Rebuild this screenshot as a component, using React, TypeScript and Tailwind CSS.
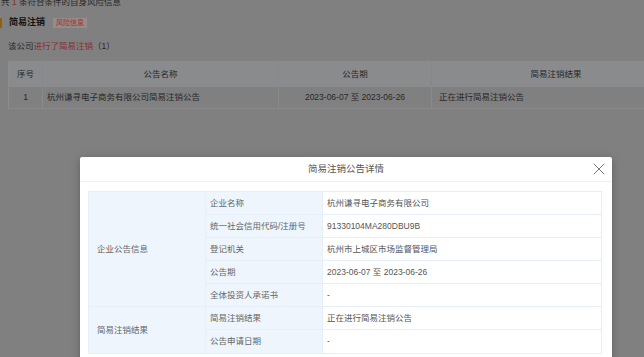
import { X } from "lucide-react";

const rows = [
  { label: "企业名称", value: "杭州谦寻电子商务有限公司" },
  { label: "统一社会信用代码/注册号", value: "91330104MA280DBU9B" },
  { label: "登记机关", value: "杭州市上城区市场监督管理局" },
  { label: "公告期", value: "2023-06-07 至 2023-06-26" },
  { label: "全体投资人承诺书", value: "-" },
  { label: "简易注销结果", value: "正在进行简易注销公告" },
  { label: "公告申请日期", value: "-" },
];

function DetailRow({ label, value, last }: { label: string; value: string; last?: boolean }) {
  return (
    <div className={`flex h-[23px] ${last ? "" : "border-b border-[#e6eef7]"}`}>
      <div className="w-[117px] flex items-center pl-[4px] bg-[#eef5fd] text-[#666] border-r border-[#e6eef7]">{label}</div>
      <div className="flex-1 flex items-center pl-[4px] text-[#555]">{value}</div>
    </div>
  );
}

export default function App() {
  return (
    <div className="relative w-[644px] h-[357px] overflow-hidden bg-[#d6d6d6] font-['Liberation_Sans','Noto_Sans_CJK_SC',sans-serif] text-[8.5px] text-[#333]">
      {/* page under the mask */}
      <div className="-mt-[4px]">
        <div className="h-[12px] leading-[12px] pl-[1px] text-[#444]">
          共 <span className="text-[#e0504c]">1</span> 条符合条件的自身风险信息
        </div>
        <div className="mt-[9px] flex items-center h-[12px]">
          <div className="w-[2px] h-[10px] bg-[#f0a020]"></div>
          <span className="ml-[7px] font-bold text-[9px] text-[#222]">简易注销</span>
          <span className="ml-[8px] px-[3px] h-[10px] leading-[10px] text-[7px] text-[#ff5a55] bg-[#ffe4e2]">风险信息</span>
        </div>
        <div className="mt-[11px] pl-[8px] h-[12px] leading-[12px] text-[#444]">
          该公司<span className="text-[#e0504c]">进行了简易注销</span>（1）
        </div>
        <div className="mt-[9px] ml-[8px] w-[672px] border-l border-[#e8ebef]">
          <div className="flex h-[26px] bg-[#e4e8ec] text-[#444]">
            <div className="w-[34px] flex items-center justify-center border-r border-[#dde2e8]">序号</div>
            <div className="w-[236px] flex items-center justify-center border-r border-[#dde2e8]">公告名称</div>
            <div className="w-[153px] flex items-center justify-center border-r border-[#dde2e8]">公告期</div>
            <div className="flex-1 flex items-center justify-center">简易注销结果</div>
          </div>
          <div className="flex h-[22px] border-b border-[#e6e6e6] text-[#444]">
            <div className="w-[34px] flex items-center justify-center border-r border-[#e6e6e6]">1</div>
            <div className="w-[236px] flex items-center pl-[4px] border-r border-[#e6e6e6]">杭州谦寻电子商务有限公司简易注销公告</div>
            <div className="w-[153px] flex items-center justify-center border-r border-[#e6e6e6]">2023-06-07 至 2023-06-26</div>
            <div className="flex-1 flex items-center pl-[7px]">正在进行简易注销公告</div>
          </div>
        </div>
      </div>

      {/* mask */}
      <div className="absolute inset-0 bg-black/40"></div>

      {/* modal */}
      <div className="absolute left-[80px] top-[157px] w-[532px] h-[220px] bg-white shadow-[0_2px_10px_rgba(0,0,0,0.25)] rounded-[2px]">
        <div className="relative h-[25px] flex items-center justify-center border-b border-[#f0f0f0] text-[9.5px] text-[#555]">
          简易注销公告详情
          <X className="absolute right-[3px] top-[2px] w-[20px] h-[20px] text-[#777]" strokeWidth={1.2} />
        </div>
        <div className="pt-[9px] pl-[8px] pr-[10px]">
          <div className="flex border border-[#e6eef7]">
            <div className="w-[117px] flex flex-col bg-[#eef5fd] text-[#666] border-r border-[#e6eef7]">
              <div className="h-[115px] flex items-center pl-[8px] border-b border-[#e6eef7]">企业公告信息</div>
              <div className="h-[46px] flex items-center pl-[8px]">简易注销结果</div>
            </div>
            <div className="flex-1 flex flex-col">
              {rows.map((r, i) => (
                <DetailRow key={r.label} label={r.label} value={r.value} last={i === rows.length - 1} />
              ))}
            </div>
          </div>
        </div>
      </div>
    </div>
  );
}
